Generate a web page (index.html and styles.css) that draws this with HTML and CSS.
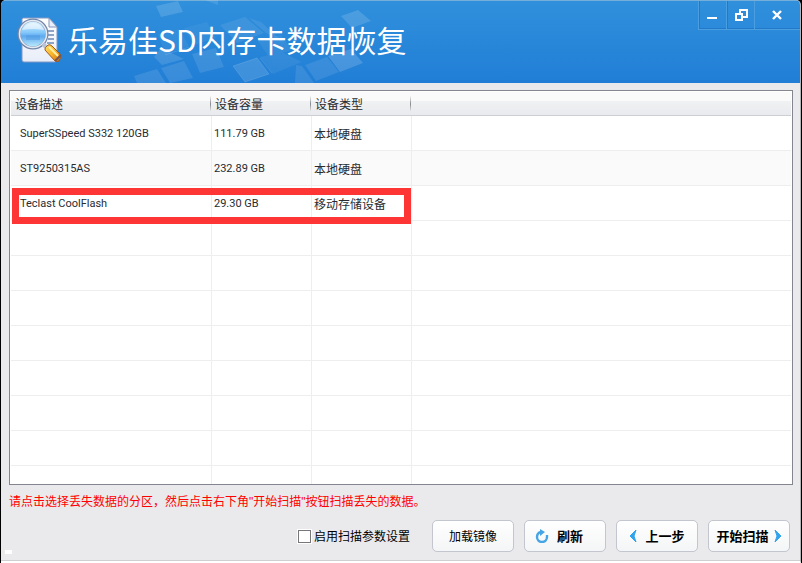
FILE: index.html
```html
<!DOCTYPE html>
<html lang="zh-CN">
<head>
<meta charset="utf-8">
<title>乐易佳SD内存卡数据恢复</title>
<link rel="stylesheet" href="styles.css">
</head>
<body>
<div class="window">
  <header class="titlebar">
    <svg class="tiles" width="290" height="83" viewBox="0 0 290 83" aria-hidden="true">
      <g fill="#fff" opacity=".9">
        <path opacity=".16" d="M24 6L46 1L51 12L29 17Z"/>
        <path opacity=".13" d="M73 0H86V5Z"/>
        <path opacity=".06" d="M26 34L47 29L57 46L33 54ZM52 28L75 22L84 38L62 45Z"/>
        <path opacity=".14" d="M22 57L29 48L52 59L30 65Z"/>
        <path opacity=".12" d="M2 76L25 69L34 83H5ZM29 68L52 61L61 78L38 83ZM60 54L84 48L92 67L68 73Z"/>
        <path opacity=".1" d="M88 25L113 17L132 33L105 43ZM117 18L129 22L152 43L134 33Z"/>
        <path opacity=".16" d="M209 16L226 10L239 21L220 28Z"/>
        <path opacity=".15" d="M101 66L125 58L137 74L113 82Z"/>
        <path opacity=".07" d="M128 57L150 52L170 62L141 74ZM126 41L149 35L160 50L137 57Z"/>
        <path opacity=".11" d="M173 65L195 57L207 72L184 81ZM164 65L170 66L182 83H163Z"/>
        <path opacity=".18" d="M196 56L219 49L231 63L208 72Z"/>
      </g>
      <path d="M101 66L125 58L137 74L113 82ZM128 58L140 73M33 55L57 47" fill="none" stroke="#fff" opacity=".12"/>
    </svg>
    <svg class="logo" width="46" height="48" viewBox="0 0 46 48" aria-hidden="true">
      <defs>
        <linearGradient id="paper" x2="0" y2="1"><stop stop-color="#fff"/><stop offset="1" stop-color="#e9edf8"/></linearGradient>
        <linearGradient id="lens" x2="0" y2="1"><stop stop-color="#e8f8ff"/><stop offset=".45" stop-color="#83c8fb"/><stop offset=".58" stop-color="#5ea9ee"/><stop offset="1" stop-color="#c8f4ff"/></linearGradient>
        <linearGradient id="grip" x2="1" y2="1"><stop stop-color="#ffdf65"/><stop offset=".5" stop-color="#f8b62b"/><stop offset="1" stop-color="#cd6c0b"/></linearGradient>
      </defs>
      <path d="M6 1H32L40 10V43Q40 45 38 45H7Q5 45 5 43V2Z" fill="url(#paper)" stroke="#8298c6"/>
      <path d="M32 1V10H40Z" fill="#e9effa" stroke="#8797b8"/>
      <path d="M29 14H37M31 18H37M31 22H37M30 26H37" stroke="#6d89b4" stroke-width="1.5"/>
      <circle cx="16" cy="17" r="14" fill="url(#lens)" stroke="#7186a9" stroke-width="3"/>
      <circle cx="16" cy="17" r="13.5" fill="none" stroke="#e4eaf2" stroke-width="1.6"/>
      <path d="M5 13Q8 6 16 6T27 13Q16 11 5 13Z" fill="#fff" opacity=".55"/>
      <path d="M9 18H23V23H9Z" fill="#4a94df" opacity=".4"/>
      <path d="M26 27L29 30" stroke="#b8c4d6" stroke-width="4"/>
      <path d="M28 33Q27 31 31 28Q33 27 35 29L43 37Q45 40 42 44Q40 45 38 44Z" fill="url(#grip)" stroke="#a65c17"/>
      <path d="M32 30L41 39" stroke="#fff0a4" stroke-width="2"/>
      <path d="M38 44L44 38" stroke="#765555" stroke-width="2"/>
    </svg>
    <h1 class="title">乐易佳SD内存卡数据恢复</h1>
    <div class="controls">
      <button class="control" type="button" aria-label="最小化"><svg width="14" height="14" viewBox="0 0 14 14"><path d="M2 9H12V11H2Z" fill="#fff"/></svg></button>
      <button class="control" type="button" aria-label="还原"><svg width="14" height="14" viewBox="0 0 14 14"><path d="M5 2H13V9H8M6 2V6M2 6H8V12H2Z" fill="none" stroke="#fff" stroke-width="2"/></svg></button>
      <button class="control control-close" type="button" aria-label="关闭"><svg width="14" height="14" viewBox="0 0 14 14"><path d="M3 3L11 11M11 3L3 11" stroke="#fff" stroke-width="2.4"/></svg></button>
    </div>
  </header>
  <main class="content">
    <div class="list">
      <table class="devices">
        <colgroup><col class="col-name"><col class="col-size"><col class="col-type"><col></colgroup>
        <thead><tr><th>设备描述</th><th>设备容量</th><th>设备类型</th><th></th></tr></thead>
        <tbody>
          <tr><td>SuperSSpeed S332 120GB</td><td>111.79 GB</td><td class="cjk">本地硬盘</td><td></td></tr>
          <tr class="alt"><td>ST9250315AS</td><td>232.89 GB</td><td class="cjk">本地硬盘</td><td></td></tr>
          <tr><td>Teclast CoolFlash</td><td>29.30 GB</td><td class="cjk">移动存储设备</td><td></td></tr>
          <tr><td></td><td></td><td></td><td></td></tr>
          <tr><td></td><td></td><td></td><td></td></tr>
          <tr><td></td><td></td><td></td><td></td></tr>
          <tr><td></td><td></td><td></td><td></td></tr>
          <tr><td></td><td></td><td></td><td></td></tr>
          <tr><td></td><td></td><td></td><td></td></tr>
          <tr><td></td><td></td><td></td><td></td></tr>
          <tr class="partial"><td></td><td></td><td></td><td></td></tr>
        </tbody>
      </table>
      <div class="marker"></div>
    </div>
    <p class="hint">请点击选择丢失数据的分区，然后点击右下角"开始扫描"按钮扫描丢失的数据。</p>
    <div class="actions">
      <span class="nub"></span>
      <label class="option"><input class="check" type="checkbox">启用扫描参数设置</label>
      <button class="button" type="button">加载镜像</button>
      <button class="button strong refresh" type="button"><svg width="14" height="14" viewBox="0 0 14 14" aria-hidden="true"><path d="M6 3Q2 4 2 8A5 5 0 0 0 12 8V6" fill="none" stroke="#45a5e5" stroke-width="2.4"/><path d="M5 0L10 3L5 7Z" fill="#45a5e5"/></svg>刷新</button>
      <button class="button strong" type="button"><svg width="8" height="12" viewBox="0 0 8 12" aria-hidden="true"><path d="M7 0L1 6L7 12L5 6Z" fill="#32a4ed" stroke="#32a4ed"/></svg>上一步</button>
      <button class="button strong next" type="button">开始扫描<svg width="8" height="12" viewBox="0 0 8 12" aria-hidden="true"><path d="M1 0L7 6L1 12L3 6Z" fill="#32a4ed" stroke="#32a4ed"/></svg></button>
    </div>
  </main>
</div>
</body>
</html>
```
FILE: styles.css
```css
* { box-sizing: border-box; }
html, body { height: 100%; }
body {
  margin: 0;
  padding: 0 1px;
  background: #000;
  color: #000;
  font: 12px/16px "Noto Sans CJK SC", sans-serif;
}
button, input { margin: 0; font: inherit; color: inherit; }
svg { display: block; flex: none; }

.window {
  display: flex;
  flex-direction: column;
  min-height: 100%;
  border-right: 1px solid #b5b5b8;
  border-bottom: 2px solid #fff;
  border-radius: 5px 5px 0 0;
  background: #eaeaec;
  overflow: hidden;
}
.titlebar {
  position: relative;
  display: flex;
  align-items: flex-start;
  height: 83px;
  padding-left: 16px;
  border-top: 1px solid #76aeda;
  background: linear-gradient(#3090dc, #217ed6);
}
.tiles { position: absolute; left: 131px; top: -1px; }
.logo { position: relative; margin-top: 16px; }
.title {
  position: relative;
  margin: 17px 0 0 5px;
  color: #fff;
  font: 400 30px/42px "Noto Sans CJK SC", sans-serif;
  white-space: nowrap;
}
.controls {
  display: flex;
  height: 29px;
  margin-left: auto;
  border: solid #4b9fe1;
  border-width: 0 0 1px 1px;
}
.control {
  display: flex;
  align-items: center;
  justify-content: center;
  width: 28px;
  padding: 0 4px 0 0;
  border: solid #217ac8;
  border-width: 0 0 1px 1px;
  background: none;
}
.control + .control { padding-right: 2px; box-shadow: -1px 0 #4b9fe1; }
.control-close { width: 45px; border-left: 0; }

.content {
  flex: 1;
  padding: 7px 7px 0 8px;
  border-bottom: 1px solid #cfcfd3;
}
.list {
  position: relative;
  padding: 1px 1px 0;
  border: 1px solid #83868f;
  background: #fff;
}
.devices {
  width: 100%;
  table-layout: fixed;
  border-collapse: separate;
  border-spacing: 0;
  color: #282b30;
}
.col-name { width: 201px; }
.col-size, .col-type { width: 100px; }
.devices th {
  height: 24px;
  padding: 0 0 0 3px;
  border-bottom: 1px solid #cdcfd3;
  background:
    linear-gradient(#f5f5f6, #85888e 50%, #f0f1f3) right 1px center / 1px 16px no-repeat,
    linear-gradient(#fafafa 40%, #f0f1f3 40%, #e9eaed);
  font-weight: 400;
  text-align: left;
}
.devices th:first-child { padding-left: 4px; }
.devices th:last-child { background: linear-gradient(#fafafa 40%, #f0f1f3 40%, #e9eaed); }
.devices td {
  height: 35px;
  padding: 2px 0 0 2px;
  border: solid #eeeeef;
  border-width: 0 1px 1px 0;
  font: 11px/16px Roboto, sans-serif;
}
.devices td:first-child { padding-left: 9px; }
.devices td:last-child { border-right: 0; }
.devices .cjk { font: 12px/16px "Noto Sans CJK SC", sans-serif; }
.devices .alt td { background: #fafafa; }
.devices .partial td { height: 18px; border-bottom: 0; }
.marker {
  position: absolute;
  left: 2px;
  top: 97px;
  width: 399px;
  height: 36px;
  border: 7px solid #fd3535;
}
.hint {
  margin: 9px 0 0;
  color: #f00;
  font-family: "Liberation Sans", "Noto Sans CJK SC", sans-serif;
}
.actions {
  display: flex;
  align-items: center;
  gap: 10px;
  margin-top: 8px;
  padding-right: 3px;
}
.nub { width: 7px; height: 4px; margin: 32px auto 0 -4px; background: #fff; }
.option { display: flex; align-items: center; gap: 3px; margin-right: 12px; }
.check {
  appearance: none;
  width: 13px;
  height: 13px;
  border: 1px solid #77777b;
  outline: 1px solid #fff;
  background: #fff;
}
.button {
  display: flex;
  align-items: center;
  justify-content: center;
  gap: 8px;
  width: 82px;
  height: 32px;
  padding: 0;
  border: 1px solid #c3c5cf;
  border-radius: 5px;
  background: linear-gradient(#fff, #f4f5f6);
}
.strong { font-size: 13px; font-weight: 700; }
.refresh { padding-right: 12px; }
.next { gap: 5px; }
```
